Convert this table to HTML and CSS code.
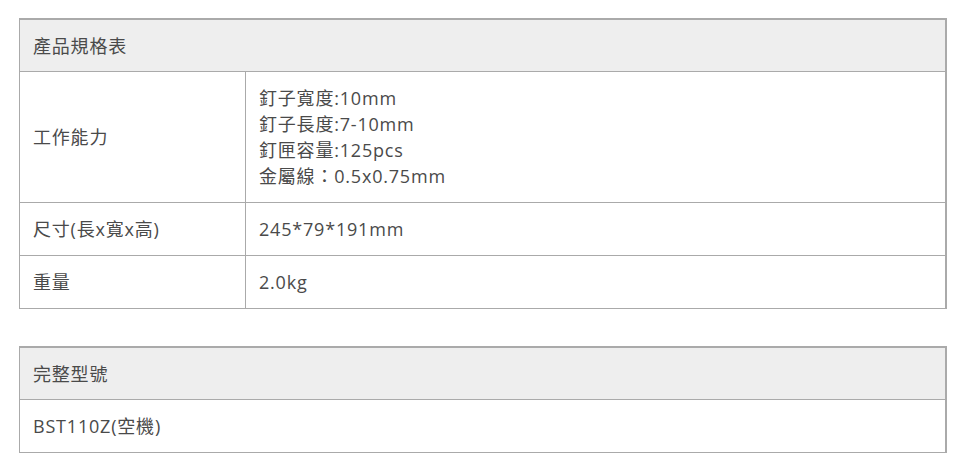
FILE: index.html
```html
<!DOCTYPE html>
<html lang="zh-Hant">
<head>
<meta charset="utf-8">
<title>產品規格表</title>
<link rel="stylesheet" href="styles.css">
</head>
<body>
<div class="page">
  <table class="spec">
    <colgroup><col class="col-label"><col></colgroup>
    <thead>
      <tr><th colspan="2">產品規格表</th></tr>
    </thead>
    <tbody>
      <tr>
        <td>工作能力</td>
        <td>釘子寬度:10mm<br>釘子長度:7-10mm<br>釘匣容量:125pcs<br>金屬線：0.5x0.75mm</td>
      </tr>
      <tr>
        <td>尺寸(長x寬x高)</td>
        <td>245*79*191mm</td>
      </tr>
      <tr>
        <td>重量</td>
        <td>2.0kg</td>
      </tr>
    </tbody>
  </table>

  <table class="spec model">
    <thead>
      <tr><th>完整型號</th></tr>
    </thead>
    <tbody>
      <tr><td>BST110Z(空機)</td></tr>
    </tbody>
  </table>
</div>
</body>
</html>
```

FILE: styles.css
```css
html, body {
  margin: 0;
  padding: 0;
  background: #fff;
}

.page {
  padding: 18px 14px 0 19px;
  width: 928px;
}

.spec {
  width: 928px;
  table-layout: fixed;
  border-collapse: separate;
  border-spacing: 0;
  border: 1px solid #aaa;
  font-family: "Open Sans", "Noto Sans CJK TC", sans-serif;
  font-size: 18px;
  letter-spacing: 0.8px;
  line-height: 26px;
  color: #4a4a4a;
}

.spec + .spec {
  margin-top: 37px;
}

.col-label {
  width: 226px;
}

.spec th,
.spec td {
  border-top: 1px solid #aaa;
  border-right: 1px solid #aaa;
  padding: 13px;
  text-align: left;
  vertical-align: middle;
  font-weight: normal;
}

.spec th {
  padding-bottom: 12px;
  background: #eee;
}
```
